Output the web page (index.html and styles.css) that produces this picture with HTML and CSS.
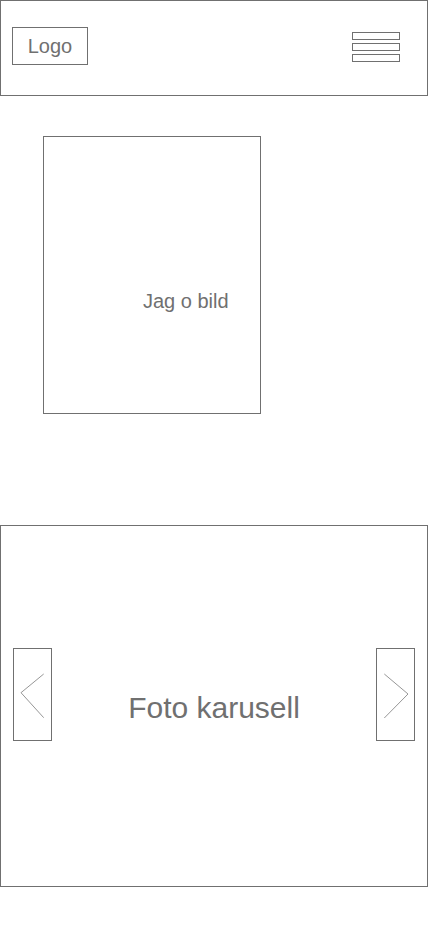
FILE: index.html
```html
<!DOCTYPE html>
<html lang="sv">
<head>
<meta charset="utf-8">
<title>Wireframe</title>
<link rel="stylesheet" href="styles.css">
</head>
<body>
<header class="header">
  <div class="logo">Logo</div>
  <div class="burger">
    <span class="bar"></span>
    <span class="bar"></span>
    <span class="bar"></span>
  </div>
</header>
<section class="photo">
  <span class="photo-text">Jag o bild</span>
</section>
<section class="carousel">
  <div class="arrow">
    <svg width="37" height="91" viewBox="0 0 37 91"><polyline points="29.7,25 7,43.7 29.7,68.7" fill="none" stroke="#8a8a8a" stroke-width="0.9"/></svg>
  </div>
  <div class="carousel-text">Foto karusell</div>
  <div class="arrow">
    <svg width="37" height="91" viewBox="0 0 37 91"><polyline points="7.3,25 31,45 7.3,69" fill="none" stroke="#8a8a8a" stroke-width="0.9"/></svg>
  </div>
</section>
</body>
</html>
```

FILE: styles.css
```css
* { box-sizing: border-box; }
html, body { margin: 0; padding: 0; background: #fff; }
body {
  font-family: "Liberation Sans", Arial, Helvetica, sans-serif;
  color: #707070;
  width: 428px;
}
.header {
  height: 96px;
  border: 1px solid #707070;
  display: flex;
  align-items: flex-start;
  padding: 26px 27px 0 11px;
}
.logo {
  width: 76px;
  height: 38px;
  border: 1px solid #707070;
  display: flex;
  align-items: center;
  justify-content: center;
  font-size: 20px;
  line-height: 23px;
  padding-top: 1px;
}
.burger {
  margin-left: auto;
  margin-top: 5px;
  display: flex;
  flex-direction: column;
  gap: 3px;
}
.bar {
  display: block;
  width: 48px;
  height: 8px;
  border: 1px solid #707070;
}
.photo {
  margin: 40px 0 0 43px;
  width: 218px;
  height: 278px;
  border: 1px solid #707070;
  padding: 153px 0 0 99px;
}
.photo-text {
  display: block;
  font-size: 20px;
  line-height: 23px;
  white-space: nowrap;
}
.carousel {
  margin-top: 111px;
  width: 428px;
  height: 362px;
  border: 1px solid #707070;
  display: flex;
  align-items: flex-start;
  padding: 122px 12px 0 12px;
}
.arrow {
  width: 39px;
  height: 93px;
  border: 1px solid #707070;
  flex: none;
}
.arrow svg { display: block; }
.carousel-text {
  flex: 1;
  text-align: center;
  font-size: 30px;
  line-height: 34px;
  margin-top: 43px;
}
```
